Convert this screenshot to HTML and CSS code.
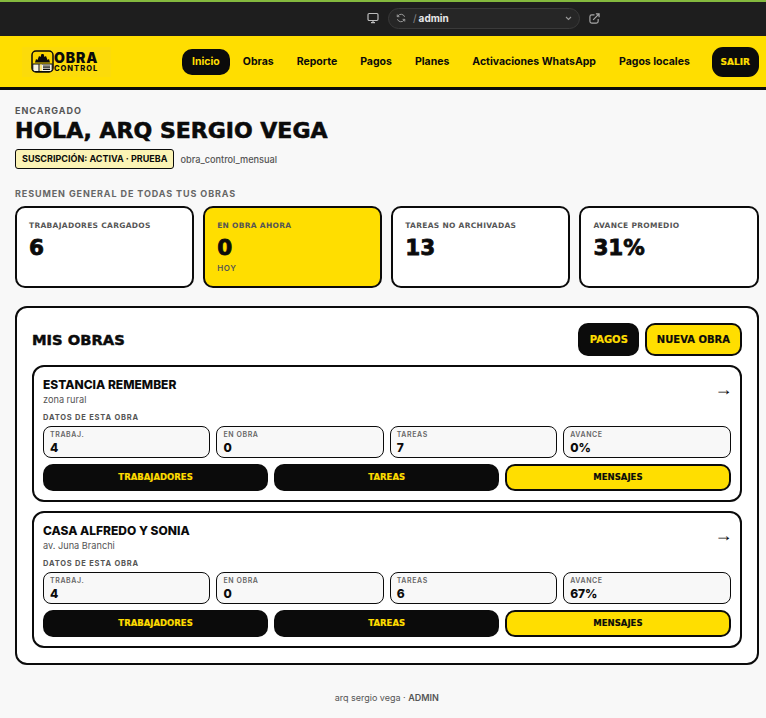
FILE: index.html
```html
<!DOCTYPE html>
<html lang="es">
<head>
    <meta charset="UTF-8">
    <meta name="viewport" content="width=device-width, initial-scale=1.0">
    <title>Obra Control</title>
    <link rel="stylesheet" href="styles.css">
</head>
<body>
    <!-- Browser preview bar -->
    <div class="browser-bar">
        <svg class="bar-icon device" width="12" height="12" viewBox="0 0 12 12" fill="none" stroke="#bdbdbd" stroke-width="1.2">
            <rect x="1" y="1.5" width="10" height="7" rx="1.2"/>
            <path d="M4 10.6h4M6 8.5v2"/>
        </svg>
        <div class="url-box">
            <svg class="bar-icon" width="10" height="10" viewBox="0 0 12 12" fill="none" stroke="#9a9a9a" stroke-width="1.2">
                <path d="M10.3 4.5A4.5 4.5 0 0 0 2.4 3.4L1.5 4.4M1.5 1.8v2.6h2.6"/>
                <path d="M1.7 7.5a4.5 4.5 0 0 0 7.9 1.1l.9-1M10.5 10.2V7.6H7.9"/>
            </svg>
            <span class="url-slash">/</span>
            <span class="url-path">admin</span>
            <svg class="url-caret" width="7" height="5" viewBox="0 0 7 5" fill="none" stroke="#9a9a9a" stroke-width="1.1">
                <path d="M1 1l2.5 2.5L6 1"/>
            </svg>
        </div>
        <svg class="bar-icon" width="11" height="11" viewBox="0 0 12 12" fill="none" stroke="#a8a8a8" stroke-width="1.3">
            <path d="M6 2H3a2 2 0 0 0-2 2v5a2 2 0 0 0 2 2h5a2 2 0 0 0 2-2V6.5"/>
            <path d="M4.5 7.5L11 1M7.5 1H11v3.5"/>
        </svg>
    </div>

    <!-- Main header -->
    <header class="topbar">
        <div class="logo-wrap">
            <div class="logo">
                <svg width="23" height="23" viewBox="0 0 23 23">
                    <rect x="1" y="1" width="21" height="21" rx="4" fill="#fbd500" stroke="#0b0b0b" stroke-width="1.500"/>
                    <path d="M4 12.500L5 9l1.500 1L8 6l1.500 1L10.500 4h2l1 3L15 6l1.500 4L18 9l1 3.500z" fill="#0b0b0b"/>
                    <path d="M1.800 14h19.400v5.500a2 2 0 0 1-2 2H3.800a2 2 0 0 1-2-2z" fill="#f6f3e4" stroke="#0b0b0b" stroke-width="1"/>
                    <path d="M7.500 14.200h1.200v7H7.500z" fill="#0b0b0b"/>
                    <path d="M8.700 14.500h2.300v6.500H8.700z" fill="#fbe680"/>
                    <path d="M12 16.100h7M12 17.800h7M12 19.500h7" stroke="#0b0b0b" stroke-width="1"/>
                </svg>
                <div class="logo-text">
                    <span class="logo-top">OBRA</span>
                    <span class="logo-bottom">CONTROL</span>
                </div>
            </div>
        </div>
        <nav class="nav">
            <a class="nav-link active">Inicio</a>
            <a class="nav-link">Obras</a>
            <a class="nav-link">Reporte</a>
            <a class="nav-link">Pagos</a>
            <a class="nav-link">Planes</a>
            <a class="nav-link">Activaciones WhatsApp</a>
            <a class="nav-link">Pagos locales</a>
        </nav>
        <a class="logout">SALIR</a>
    </header>

    <main class="page">
        <div class="eyebrow">ENCARGADO</div>
        <h1 class="greeting">HOLA, ARQ SERGIO VEGA</h1>
        <div class="plan-row">
            <span class="plan-badge">SUSCRIPCIÓN: ACTIVA · PRUEBA</span>
            <span class="plan-code">obra_control_mensual</span>
        </div>

        <div class="section-label">RESUMEN GENERAL DE TODAS TUS OBRAS</div>
        <div class="stats">
            <div class="stat">
                <div class="stat-label">TRABAJADORES CARGADOS</div>
                <div class="stat-value">6</div>
            </div>
            <div class="stat yellow">
                <div class="stat-label">EN OBRA AHORA</div>
                <div class="stat-value">0</div>
                <div class="stat-note">HOY</div>
            </div>
            <div class="stat">
                <div class="stat-label">TAREAS NO ARCHIVADAS</div>
                <div class="stat-value">13</div>
            </div>
            <div class="stat">
                <div class="stat-label">AVANCE PROMEDIO</div>
                <div class="stat-value">31%</div>
            </div>
        </div>

        <section class="panel">
            <div class="panel-head">
                <h2 class="panel-title">MIS OBRAS</h2>
                <div class="panel-actions">
                    <a class="btn btn-dark">PAGOS</a>
                    <a class="btn btn-yellow">NUEVA OBRA</a>
                </div>
            </div>

            <article class="obra">
                <div class="obra-head">
                    <div>
                        <h3 class="obra-name">ESTANCIA REMEMBER</h3>
                        <div class="obra-place">zona rural</div>
                    </div>
                    <span class="obra-arrow">→</span>
                </div>
                <div class="obra-label">DATOS DE ESTA OBRA</div>
                <div class="mini-stats">
                    <div class="mini"><div class="mini-label">TRABAJ.</div><div class="mini-value">4</div></div>
                    <div class="mini"><div class="mini-label">EN OBRA</div><div class="mini-value">0</div></div>
                    <div class="mini"><div class="mini-label">TAREAS</div><div class="mini-value">7</div></div>
                    <div class="mini"><div class="mini-label">AVANCE</div><div class="mini-value">0%</div></div>
                </div>
                <div class="obra-actions">
                    <a class="obra-btn">TRABAJADORES</a>
                    <a class="obra-btn">TAREAS</a>
                    <a class="obra-btn alt">MENSAJES</a>
                </div>
            </article>

            <article class="obra">
                <div class="obra-head">
                    <div>
                        <h3 class="obra-name">CASA ALFREDO Y SONIA</h3>
                        <div class="obra-place">av. Juna Branchi</div>
                    </div>
                    <span class="obra-arrow">→</span>
                </div>
                <div class="obra-label">DATOS DE ESTA OBRA</div>
                <div class="mini-stats">
                    <div class="mini"><div class="mini-label">TRABAJ.</div><div class="mini-value">4</div></div>
                    <div class="mini"><div class="mini-label">EN OBRA</div><div class="mini-value">0</div></div>
                    <div class="mini"><div class="mini-label">TAREAS</div><div class="mini-value">6</div></div>
                    <div class="mini"><div class="mini-label">AVANCE</div><div class="mini-value">67%</div></div>
                </div>
                <div class="obra-actions">
                    <a class="obra-btn">TRABAJADORES</a>
                    <a class="obra-btn">TAREAS</a>
                    <a class="obra-btn alt">MENSAJES</a>
                </div>
            </article>
        </section>

        <footer class="foot">arq sergio vega · <strong>ADMIN</strong></footer>
    </main>
</body>
</html>
```

FILE: styles.css
```css
* {
    box-sizing: border-box;
}
body {
    margin: 0;
    font-family: Inter, "Liberation Sans", sans-serif;
    background: #f8f8f8;
    color: #0b0b0b;
}

/* Browser bar */
.browser-bar {
    height: 36px;
    background: #1e1e1e;
    border-top: 2px solid #84b93e;
    display: flex;
    align-items: center;
    padding-left: 367px;
    padding-bottom: 2px;
}
.bar-icon {
    flex: none;
}
.url-box {
    width: 192px;
    height: 21px;
    margin: 0 9px 0 9px;
    padding: 0 7px 0 7px;
    background: #262626;
    border: 1px solid #3a3a3a;
    border-radius: 11px;
    display: flex;
    align-items: center;
}
.url-slash {
    margin-left: 7px;
    font-size: 10px;
    color: #8a8a8a;
}
.url-path {
    margin-left: 2px;
    font-size: 10px;
    font-weight: 700;
    color: #e8e8e8;
}
.url-caret {
    margin-left: auto;
}

/* Header */
.topbar {
    height: 54px;
    background: #ffde00;
    border-bottom: 3px solid #0b0b0b;
    display: flex;
    align-items: center;
    padding: 0 7px 0 22px;
}
.logo-wrap {
    width: 160px;
    flex: none;
}
.logo {
    width: 89px;
    height: 30px;
    padding-left: 9px;
    background: #fcdb0a;
    display: flex;
    align-items: center;
}
.logo-text {
    display: flex;
    flex-direction: column;
    gap: 2px;
}
.logo-top {
    font-size: 14px;
    line-height: 11px;
    font-weight: 900;
    letter-spacing: 0.9px;
}
.logo-bottom {
    font-size: 7.5px;
    line-height: 7px;
    font-weight: 800;
    letter-spacing: 1px;
}
.nav {
    display: flex;
    align-items: center;
    gap: 23px;
}
.nav-link {
    font-size: 10.5px;
    font-weight: 700;
    height: 26px;
    line-height: 26px;
    white-space: nowrap;
}
.nav-link.active {
    background: #0b0b0b;
    color: #ffde00;
    border-radius: 10px;
    padding: 0 10px;
    margin-right: -10px;
}
.logout {
    margin-left: auto;
    background: #0b0b0b;
    color: #ffde00;
    font-family: "DejaVu Sans", sans-serif;
    font-size: 9px;
    font-weight: 700;
    height: 30px;
    line-height: 30px;
    padding: 0 9px;
    border-radius: 11px;
    -webkit-text-stroke: 0.2px #ffde00;
}

/* Content */
.page {
    padding: 15px 7.5px 0 15px;
}
.eyebrow {
    font-size: 9px;
    line-height: 11px;
    font-weight: 700;
    letter-spacing: 1px;
    color: #555;
}
.greeting {
    margin: 3px 0 0;
    font-family: "DejaVu Sans", sans-serif;
    font-size: 22px;
    line-height: 24px;
    font-weight: 700;
    -webkit-text-stroke: 0.6px #0b0b0b;
}
.plan-row {
    display: flex;
    align-items: center;
    gap: 6px;
    margin-top: 6px;
}
.plan-badge {
    background: #fbf3b5;
    border: 1px solid #0b0b0b;
    border-radius: 3px;
    font-size: 9px;
    line-height: 18px;
    font-weight: 700;
    padding: 0 6px;
}
.plan-code {
    font-size: 9.2px;
    font-weight: 500;
    color: #555;
}
.section-label {
    margin-top: 19px;
    font-size: 9px;
    line-height: 11px;
    font-weight: 700;
    letter-spacing: 0.9px;
    color: #666;
}
.stats {
    display: grid;
    grid-template-columns: repeat(4, 1fr);
    gap: 9px;
    margin-top: 7px;
}
.stat {
    height: 82px;
    background: #fff;
    border: 2px solid #0b0b0b;
    border-radius: 10px;
    padding: 12px 12px;
}
.stat.yellow {
    background: #ffde00;
}
.stat-label {
    font-family: "DejaVu Sans", sans-serif;
    font-size: 7.5px;
    line-height: 11px;
    font-weight: 700;
    letter-spacing: 0.3px;
    color: #555;
}
.stat-value {
    margin-top: 4px;
    font-family: "DejaVu Sans", sans-serif;
    font-size: 21.5px;
    line-height: 26px;
    font-weight: 700;
    -webkit-text-stroke: 0.8px #0b0b0b;
}
.stat-note {
    margin-top: 2px;
    font-size: 8px;
    line-height: 11px;
    font-weight: 600;
    letter-spacing: 0.7px;
    color: #555;
}

/* Panel */
.panel {
    margin-top: 18px;
    background: #fff;
    border: 2px solid #0b0b0b;
    border-radius: 12px;
    padding: 15px;
}
.panel-head {
    display: flex;
    align-items: center;
    justify-content: space-between;
}
.panel-title {
    margin: 0;
    font-family: "DejaVu Sans", sans-serif;
    font-size: 14.7px;
    font-weight: 700;
    -webkit-text-stroke: 0.5px #0b0b0b;
}
.panel-actions {
    display: flex;
    gap: 6px;
}
.btn {
    height: 33px;
    line-height: 29px;
    font-family: "DejaVu Sans", sans-serif;
    font-size: 10px;
    font-weight: 700;
    padding: 0 9.5px;
    border: 2px solid #0b0b0b;
    border-radius: 10px;
    -webkit-text-stroke: 0.2px currentColor;
}
.btn-dark {
    background: #0b0b0b;
    color: #ffde00;
}
.btn-yellow {
    background: #ffde00;
}
.obra {
    margin-top: 9px;
    border: 2px solid #0b0b0b;
    border-radius: 12px;
    padding: 10px 9px 9px;
}
.obra-head {
    display: flex;
    justify-content: space-between;
    align-items: flex-start;
}
.obra-name {
    margin: 0;
    font-size: 12px;
    line-height: 16px;
    font-weight: 800;
}
.obra-place {
    margin-top: 1px;
    font-size: 9.2px;
    line-height: 12px;
    color: #555;
}
.obra-arrow {
    margin: 2px -2px 0 0;
    font-size: 18px;
    line-height: 20px;
    color: #0b0b0b;
    font-family: "Liberation Sans", sans-serif;
}
.obra-label {
    margin-top: 7px;
    font-size: 7.5px;
    line-height: 10px;
    font-weight: 700;
    letter-spacing: 0.8px;
    color: #555;
}
.mini-stats {
    display: grid;
    grid-template-columns: repeat(4, 1fr);
    gap: 6px;
    margin-top: 3px;
}
.mini {
    height: 32px;
    background: #f8f8f8;
    border: 1px solid #0b0b0b;
    border-radius: 8px;
    padding: 3px 6px;
}
.mini-label {
    font-size: 7px;
    line-height: 9px;
    font-weight: 600;
    letter-spacing: 0.6px;
    color: #666;
}
.mini-value {
    margin-top: 1px;
    font-size: 12px;
    line-height: 15px;
    font-weight: 800;
}
.obra-actions {
    display: grid;
    grid-template-columns: repeat(3, 1fr);
    gap: 6px;
    margin-top: 6px;
}
.obra-btn {
    height: 27px;
    line-height: 27px;
    text-align: center;
    font-family: "DejaVu Sans", sans-serif;
    font-size: 8.5px;
    font-weight: 700;
    background: #0b0b0b;
    color: #ffde00;
    border-radius: 10px;
    -webkit-text-stroke: 0.2px currentColor;
}
.obra-btn.alt {
    background: #ffde00;
    color: #0b0b0b;
    border: 2px solid #0b0b0b;
    line-height: 23px;
}
.foot {
    margin-top: 27px;
    text-align: center;
    font-size: 9px;
    color: #555;
}
.foot strong {
    font-weight: 600;
}
```
